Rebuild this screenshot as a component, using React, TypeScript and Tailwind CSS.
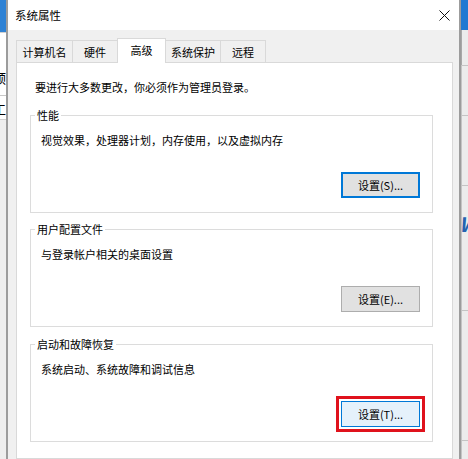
import React from 'react';

const font = { fontFamily: '"Noto Sans CJK SC", "Noto Sans", sans-serif' };

const tabs = [
  { label: '计算机名', w: 'w-[57px]' },
  { label: '硬件', w: 'w-[46px]' },
  { label: '高级', w: 'w-[49px]', active: true },
  { label: '系统保护', w: 'w-[56px]' },
  { label: '远程', w: 'w-[46px]' }
];

type BtnProps = { label: string; variant?: 'default' | 'focus' | 'hover' };

const WinButton = ({ label, variant = 'default' }: BtnProps) => {
  const look =
    variant === 'focus'
      ? 'bg-[#e1e1e1] border border-[#0078d7] shadow-[inset_0_0_0_1px_#0078d7]'
      : variant === 'hover'
        ? 'bg-[#e5f1fb] border border-[#0078d7] outline-3 outline-offset-2 outline-[#e0121c]'
        : 'bg-[#e1e1e1] border border-[#adadad]';
  return (
    <button className={`w-[79px] h-[26px] flex items-center justify-center text-[11px] leading-[14px] text-black ${look}`}>
      {label}
    </button>
  );
};

type GroupProps = { title: string; text: string; button: BtnProps; className?: string };

const GroupBox = ({ title, text, button, className }: GroupProps) => (
  <fieldset className={`w-[403px] border border-[#dcdcdc] ${className ?? ''}`}>
    <legend className="ml-[4px] px-[2px] text-[11px] leading-[14px] text-black">{title}</legend>
    <div className="flex flex-col pl-[10px] pr-[12px] pt-[11px] pb-[14px]">
      <p className="text-[11px] leading-[14px] text-black">{text}</p>
      <div className="flex justify-end mt-[25px]">
        <WinButton {...button} />
      </div>
    </div>
  </fieldset>
);

const App = () => {
  return (
    <div className="w-[468px] h-[459px] overflow-hidden flex bg-[#f0f0f0]" style={font}>
      {/* window behind, left side */}
      <div className="w-[6px] flex flex-col shrink-0">
        <div className="h-[32px] bg-[#2f82d4]" />
        <div className="h-[63px] bg-white border-t border-[#d0d0d0] flex justify-end items-end overflow-hidden pb-[9px]">
          <span className="text-[13px] leading-[16px] text-black whitespace-nowrap">预</span>
        </div>
        <div className="h-[24px] bg-white border-t border-[#c8c8c8] flex justify-end items-center overflow-hidden pt-[3px]">
          <span className="text-[13px] leading-[16px] text-black whitespace-nowrap">工</span>
        </div>
        <div className="flex-1 bg-[#eeeeee] border-t border-[#d0d0d0]" />
      </div>

      {/* dialog */}
      <div className="w-[455px] shrink-0 flex flex-col border-l-2 border-r-2 border-[#9c9c9c] bg-[#f0f0f0]">
        <div className="h-[30px] bg-white flex items-center justify-between pl-[7px] pr-[8px]">
          <span className="text-[11.5px] leading-[14px] text-black">系统属性</span>
          <svg width="11" height="11" viewBox="0 0 11 11" className="mr-[1px]">
            <path d="M0.5 0.5 L10.5 10.5 M10.5 0.5 L0.5 10.5" stroke="#111" strokeWidth="1" fill="none" />
          </svg>
        </div>

        <div className="flex-1 flex flex-col pl-[8px] pr-[6px] pt-[8px]">
          <div className="flex items-end h-[24px]">
            {tabs.map((t, i) => (
              <div
                key={t.label}
                className={`${t.w} flex items-center justify-center text-[11px] leading-[14px] text-black border border-b-0 border-[#d9d9d9] ${
                  i > 0 ? '-ml-px' : ''
                } ${t.active ? 'h-[25px] -mb-px bg-white relative z-10 pb-[3px]' : 'h-[22px] bg-[#f0f0f0]'}`}
              >
                {t.label}
              </div>
            ))}
          </div>

          <div className="flex-1 bg-white border border-[#d9d9d9] pl-[13px] pt-[17px]">
            <p className="ml-[5px] text-[11px] leading-[14px] text-black">要进行大多数更改，你必须作为管理员登录。</p>

            <GroupBox
              className="mt-[14px]"
              title="性能"
              text="视觉效果，处理器计划，内存使用，以及虚拟内存"
              button={{ label: '设置(S)...', variant: 'focus' }}
            />
            <GroupBox
              className="mt-[9px]"
              title="用户配置文件"
              text="与登录帐户相关的桌面设置"
              button={{ label: '设置(E)...' }}
            />
            <GroupBox
              className="mt-[10px]"
              title="启动和故障恢复"
              text="系统启动、系统故障和调试信息"
              button={{ label: '设置(T)...', variant: 'hover' }}
            />
          </div>
        </div>
      </div>

      {/* window behind, right side */}
      <div className="w-[7px] flex flex-col shrink-0">
        <div className="h-[30px] bg-[#1f79d2]" />
        <div className="h-[35px] bg-[#ececec] border-l border-[#a8a8a8]" />
        <div className="h-[50px] bg-[#ececec] border-l border-t border-[#c4c4c4]" />
        <div className="h-[70px] bg-[#ececec] border-l border-t border-[#c4c4c4]" />
        <div className="h-[125px] bg-[#ececec] border-l border-t border-[#c4c4c4] flex items-start overflow-hidden pt-[27px]">
          <span className="text-[20px] leading-[22px] font-bold italic text-[#2463b0] whitespace-nowrap -ml-[3px]">W</span>
        </div>
        <div className="h-[130px] bg-[#ececec] border-l border-t border-[#c4c4c4]" />
        <div className="flex-1 bg-[#ececec] border-l border-t border-[#c4c4c4]" />
      </div>
    </div>
  );
};

export default App;
